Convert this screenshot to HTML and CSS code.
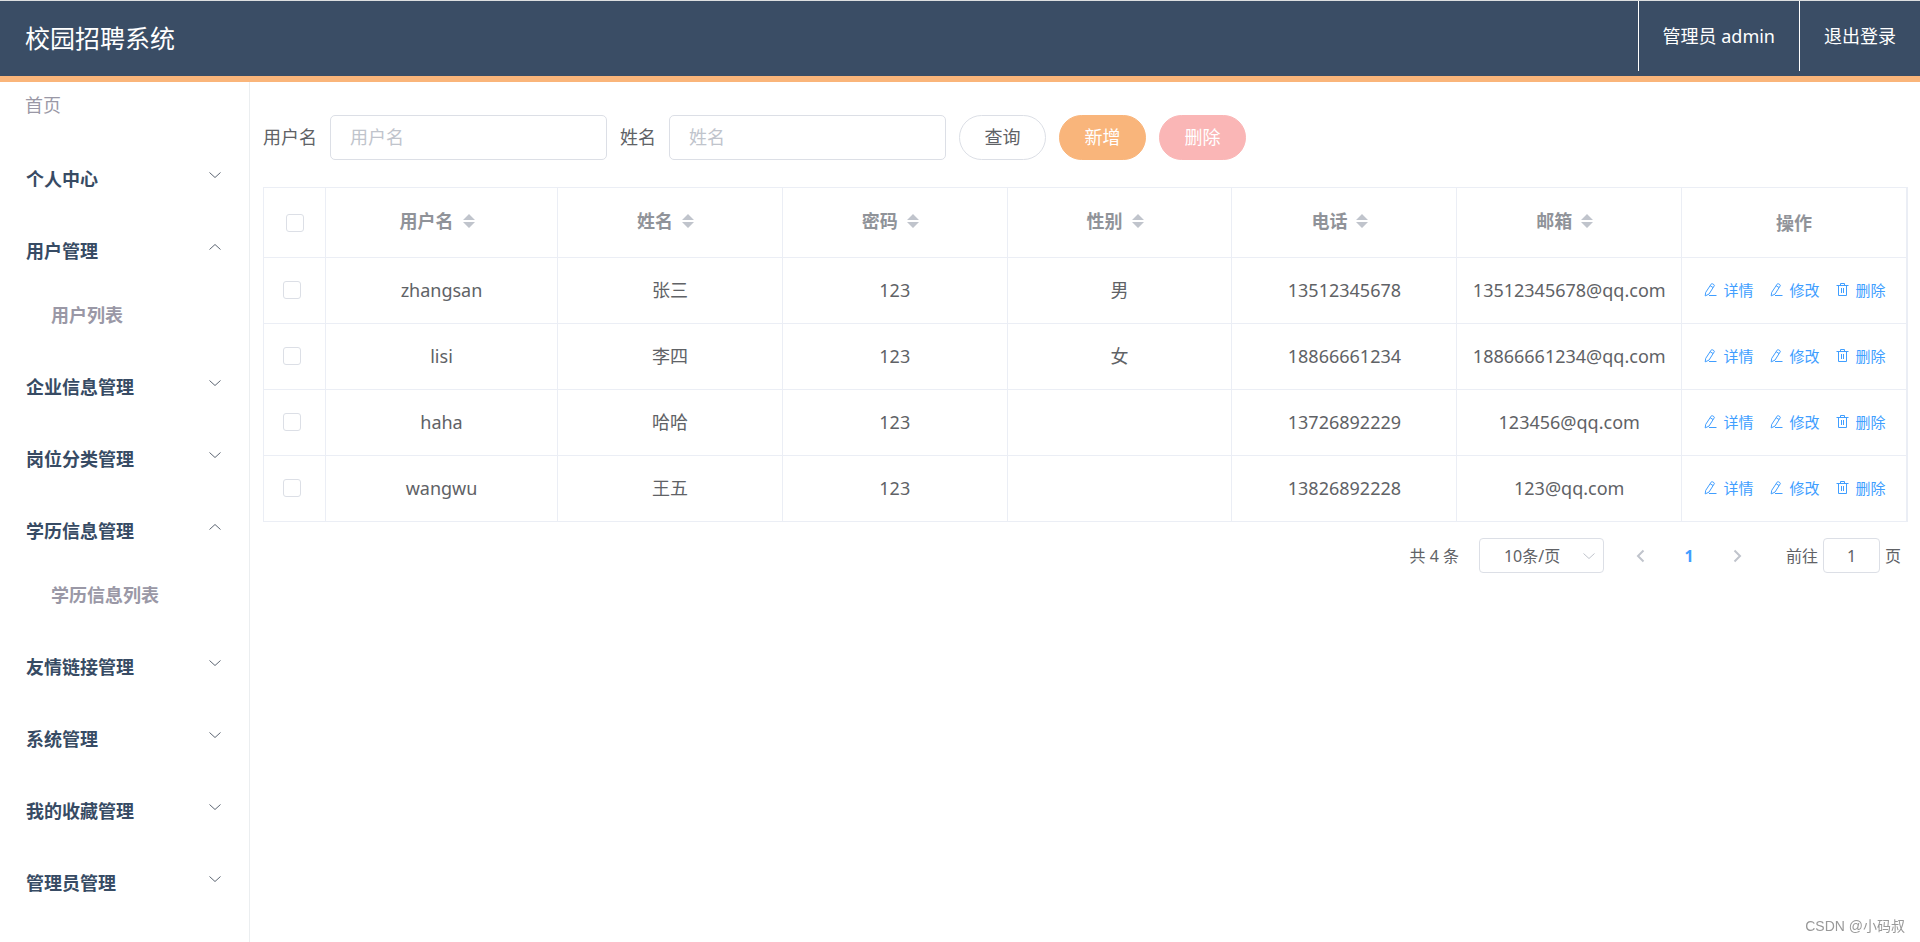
FILE: index.html
```html
<!DOCTYPE html>
<html lang="zh-CN">
<head>
<meta charset="utf-8">
<title>校园招聘系统</title>
<link rel="stylesheet" href="styles.css">
</head>
<body>
<svg class="sprite" aria-hidden="true">
  <symbol id="down" viewBox="0 0 12 12"><path d="M0.5 3.5 6 8.5 11.5 3.5"/></symbol>
  <symbol id="up" viewBox="0 0 12 12"><path d="M0.5 8.5 6 3.5 11.5 8.5"/></symbol>
  <symbol id="sort" viewBox="0 0 12 14"><path d="M6 0 12 6H0zM6 14 0 8H12z"/></symbol>
  <symbol id="edit" viewBox="0 0 15 15"><path d="M8.2 2.1Q8.7 1.3 9.5 1.8L10.9 2.6Q11.7 3.1 11.2 3.9L6 12.1 2.2 13.9 2.7 10.4ZM7.2 3.8 10 5.5M6 13.5H13.5"/></symbol>
  <symbol id="trash" viewBox="0 0 15 15"><path d="M1.5 3.5H13.5M5.5 3.5V1.5H9.5V3.5M3.5 3.5V13.5H11.5V3.5M6.5 6V11M8.5 6V11"/></symbol>
</svg>
<header class="topbar">
  <h1 class="brand">校园招聘系统</h1>
  <nav class="account">
    <a class="account-link" href="#">管理员 admin</a>
    <a class="account-link" href="#">退出登录</a>
  </nav>
</header>
<div class="layout">
  <nav class="sidebar">
    <a class="home" href="#">首页</a>
    <button class="menu" type="button">个人中心<svg class="chev"><use href="#down"/></svg></button>
    <button class="menu" type="button">用户管理<svg class="chev"><use href="#up"/></svg></button>
    <a class="submenu" href="#">用户列表</a>
    <button class="menu" type="button">企业信息管理<svg class="chev"><use href="#down"/></svg></button>
    <button class="menu" type="button">岗位分类管理<svg class="chev"><use href="#down"/></svg></button>
    <button class="menu" type="button">学历信息管理<svg class="chev"><use href="#up"/></svg></button>
    <a class="submenu" href="#">学历信息列表</a>
    <button class="menu" type="button">友情链接管理<svg class="chev"><use href="#down"/></svg></button>
    <button class="menu" type="button">系统管理<svg class="chev"><use href="#down"/></svg></button>
    <button class="menu" type="button">我的收藏管理<svg class="chev"><use href="#down"/></svg></button>
    <button class="menu" type="button">管理员管理<svg class="chev"><use href="#down"/></svg></button>
  </nav>
  <main class="content">
    <form class="filters">
      <div class="field"><label for="username">用户名</label><input class="text" id="username" type="text" placeholder="用户名"></div>
      <div class="field"><label for="realname">姓名</label><input class="text" id="realname" type="text" placeholder="姓名"></div>
      <div class="buttons">
        <button class="btn" type="button">查询</button>
        <button class="btn btn-add" type="button">新增</button>
        <button class="btn btn-del" type="button">删除</button>
      </div>
    </form>
    <table class="grid">
      <colgroup><col class="col-check"><col class="col-user"><col><col><col><col><col><col></colgroup>
      <thead>
        <tr>
          <th><input class="check" type="checkbox" aria-label="全选"></th>
          <th><span class="sortable">用户名<svg class="sort"><use href="#sort"/></svg></span></th>
          <th><span class="sortable">姓名<svg class="sort"><use href="#sort"/></svg></span></th>
          <th><span class="sortable">密码<svg class="sort"><use href="#sort"/></svg></span></th>
          <th><span class="sortable">性别<svg class="sort"><use href="#sort"/></svg></span></th>
          <th><span class="sortable">电话<svg class="sort"><use href="#sort"/></svg></span></th>
          <th><span class="sortable">邮箱<svg class="sort"><use href="#sort"/></svg></span></th>
          <th>操作</th>
        </tr>
      </thead>
      <tbody>
        <tr>
          <td class="pick"><input class="check" type="checkbox" aria-label="选择 zhangsan"></td>
          <td>zhangsan</td><td>张三</td><td>123</td><td>男</td><td>13512345678</td><td>13512345678@qq.com</td>
          <td><div class="actions"><button class="act" type="button"><svg><use href="#edit"/></svg>详情</button><button class="act" type="button"><svg><use href="#edit"/></svg>修改</button><button class="act" type="button"><svg><use href="#trash"/></svg>删除</button></div></td>
        </tr>
        <tr>
          <td class="pick"><input class="check" type="checkbox" aria-label="选择 lisi"></td>
          <td>lisi</td><td>李四</td><td>123</td><td>女</td><td>18866661234</td><td>18866661234@qq.com</td>
          <td><div class="actions"><button class="act" type="button"><svg><use href="#edit"/></svg>详情</button><button class="act" type="button"><svg><use href="#edit"/></svg>修改</button><button class="act" type="button"><svg><use href="#trash"/></svg>删除</button></div></td>
        </tr>
        <tr>
          <td class="pick"><input class="check" type="checkbox" aria-label="选择 haha"></td>
          <td>haha</td><td>哈哈</td><td>123</td><td></td><td>13726892229</td><td>123456@qq.com</td>
          <td><div class="actions"><button class="act" type="button"><svg><use href="#edit"/></svg>详情</button><button class="act" type="button"><svg><use href="#edit"/></svg>修改</button><button class="act" type="button"><svg><use href="#trash"/></svg>删除</button></div></td>
        </tr>
        <tr>
          <td class="pick"><input class="check" type="checkbox" aria-label="选择 wangwu"></td>
          <td>wangwu</td><td>王五</td><td>123</td><td></td><td>13826892228</td><td>123@qq.com</td>
          <td><div class="actions"><button class="act" type="button"><svg><use href="#edit"/></svg>详情</button><button class="act" type="button"><svg><use href="#edit"/></svg>修改</button><button class="act" type="button"><svg><use href="#trash"/></svg>删除</button></div></td>
        </tr>
      </tbody>
    </table>
    <div class="pager">
      <span>共 4 条</span>
      <div class="size">
        <select class="size-select" aria-label="每页条数"><option>10条/页</option></select>
        <svg class="size-arrow"><use href="#down"/></svg>
      </div>
      <div class="pages">
        <button class="page" type="button" aria-label="上一页"><svg class="step" viewBox="0 0 14 14"><path d="M9.5 1.5 4 7 9.5 12.5"/></svg></button>
        <button class="page current" type="button">1</button>
        <button class="page" type="button" aria-label="下一页"><svg class="step" viewBox="0 0 14 14"><path d="M4.5 1.5 10 7 4.5 12.5"/></svg></button>
      </div>
      <div class="jump"><label for="page">前往</label><input class="jump-input" id="page" type="text" value="1"><span>页</span></div>
    </div>
  </main>
</div>
<div class="watermark">CSDN @小码叔</div>
</body>
</html>
```
FILE: styles.css
```css
* { box-sizing: border-box; }
body {
  margin: 0;
  min-height: 100vh;
  display: flex;
  flex-direction: column;
  background: #fff;
  color: #606266;
  font: 18px/24px "Noto Sans", "Noto Sans CJK SC", sans-serif;
}
button, input, select { font: inherit; color: inherit; margin: 0; }
button { cursor: pointer; padding: 0; border: 0; background: none; }
a { color: inherit; text-decoration: none; }
svg { fill: none; stroke: currentColor; flex: none; }
.sprite { position: absolute; width: 0; height: 0; }

.topbar {
  display: flex;
  justify-content: space-between;
  align-items: flex-start;
  height: 82px;
  border-top: 1px solid #dcdfe0;
  border-bottom: 6px solid #fab57a;
  background: #3a4d65;
  color: #fff;
}
.brand { margin: 0; padding-left: 25px; font-size: 25px; font-weight: 400; line-height: 75px; }
.account { display: flex; }
.account-link { padding: 0 24px; border-left: 1px solid #fff; line-height: 70px; }

.layout { display: flex; flex: 1; }
.sidebar {
  display: flex;
  flex-direction: column;
  flex: none;
  width: 250px;
  border-right: 1px solid #ebeef0;
  color: #374b64;
}
.home { padding: 11px 25px 26px; color: #9a98a6; }
.menu {
  display: flex;
  justify-content: space-between;
  align-items: center;
  height: 72px;
  padding: 0 28px 0 26px;
  font-weight: 700;
}
.chev { width: 12px; height: 12px; margin-bottom: 8px; color: #5d6673; }
.submenu { height: 64px; padding: 16px 0 24px 51px; color: #9a98a6; font-weight: 700; }

.content { flex: 1; min-width: 0; padding: 33px 12px 24px 13px; }
.filters { display: flex; gap: 13px; margin-bottom: 27px; }
.field { display: flex; align-items: center; gap: 13px; }
.field label { padding-bottom: 2px; }
.text {
  width: 277px;
  height: 45px;
  padding: 0 19px 2px;
  border: 1px solid #dcdfe6;
  border-radius: 5px;
  background: #fff;
}
.text::placeholder { color: #c0c4cc; opacity: 1; }
.buttons { display: flex; gap: 13px; }
.btn { width: 87px; height: 45px; padding-bottom: 2px; border: 1px solid #dcdfe6; border-radius: 24px; }
.btn-add { border-color: #f9b57b; background: #f9b57b; color: #fff; }
.btn-del { border-color: #fab6b6; background: #fab6b6; color: #fff; }

.grid {
  width: 100%;
  table-layout: fixed;
  border-collapse: separate;
  border-spacing: 0;
  border: 1px solid #ebeef5;
  border-bottom: 0;
  text-align: center;
}
.col-check { width: 62px; }
.col-user { width: 232px; }
.grid th, .grid td {
  height: 66px;
  padding: 0 0 2px;
  border-right: 1px solid #ebeef5;
  border-bottom: 1px solid #ebeef5;
  white-space: nowrap;
}
.grid th { height: 70px; padding: 0; color: #909399; font-weight: 700; }
.grid .pick { padding-right: 5px; }
.sortable { display: inline-flex; align-items: center; gap: 9px; padding: 0 9px 3px 0; }
.sort { width: 12px; height: 14px; fill: #c0c4cc; stroke: none; }
.check {
  appearance: none;
  display: block;
  width: 18px;
  height: 18px;
  margin: 0 auto;
  border: 1px solid #dcdfe6;
  border-radius: 3px;
  background: #fff;
}
.actions { display: flex; justify-content: center; gap: 15px; color: #409eff; }
.act { display: flex; align-items: center; gap: 6px; font-size: 15px; }
.act svg { width: 15px; height: 15px; }

.pager {
  display: flex;
  justify-content: flex-end;
  align-items: center;
  margin-top: 16px;
  padding-right: 7px;
  font-size: 16px;
}
.size { position: relative; margin: 0 13px 0 20px; }
.size-select {
  appearance: none;
  display: block;
  width: 125px;
  height: 35px;
  padding: 0 0 0 24px;
  border: 1px solid #dcdfe6;
  border-radius: 4px;
  background: #fff;
}
.size-arrow { position: absolute; top: 12px; right: 9px; width: 12px; height: 12px; color: #c0c4cc; pointer-events: none; }
.pages { display: flex; margin-right: 25px; }
.page { display: grid; place-items: center; width: 48px; height: 35px; color: #c0c4cc; }
.current { color: #409eff; font-weight: 700; }
.step { width: 14px; height: 14px; stroke-width: 2; }
.jump { display: flex; align-items: center; gap: 5px; }
.jump-input { width: 57px; height: 35px; padding: 0; border: 1px solid #dcdfe6; border-radius: 4px; text-align: center; }

.watermark {
  position: fixed;
  right: 15px;
  bottom: 6px;
  color: #999;
  font: 14px/20px "Liberation Sans", "Noto Sans CJK SC", sans-serif;
}
```
